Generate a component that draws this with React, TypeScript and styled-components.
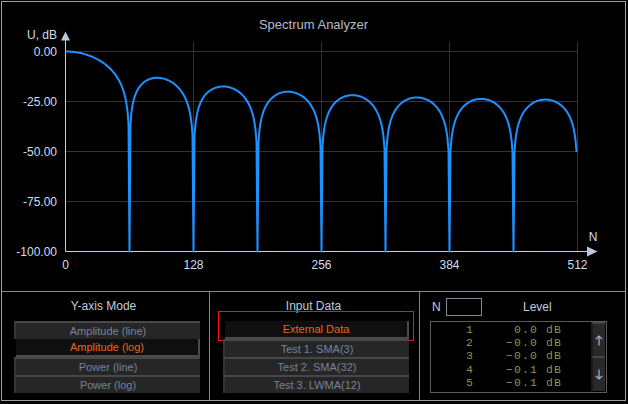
import React, { useMemo } from 'react';
import styled, { createGlobalStyle, css } from 'styled-components';

const GlobalStyle = createGlobalStyle`
  html, body { margin: 0; padding: 0; background: #000; }
  body { font-family: "Liberation Sans", Arial, sans-serif; }
`;

const Frame = styled.div`
  margin: 1px 0 0 1px;
  width: 625px;
  height: 400px;
  box-sizing: border-box;
  border: 1px solid #a0a0a0;
  background: #000;
  display: flex;
  flex-direction: column;
`;

const ChartPanel = styled.section`
  height: 290px;
  box-sizing: border-box;
  border-bottom: 1px solid #888;
  display: flex;
  flex-direction: column;
`;

const ChartTitle = styled.div`
  height: 26px;
  box-sizing: border-box;
  padding-top: 15px;
  text-align: center;
  font-size: 13px;
  line-height: 15px;
  color: #b4bccb;
  white-space: nowrap;
`;

const ChartSvg = styled.svg`
  display: block;
  width: 623px;
  height: 263px;
`;

const BottomPanel = styled.section`
  flex: 1;
  display: grid;
  grid-template-columns: 208px 210px 1fr;
`;

const Column = styled.div<{ $last?: boolean }>`
  box-sizing: border-box;
  padding-top: 7px;
  ${(p) => !p.$last && css`border-right: 1px solid #808080;`}
  display: flex;
  flex-direction: column;
`;

const GroupTitle = styled.div<{ $shift?: number }>`
  font-size: 12px;
  line-height: 14px;
  color: #c2ccda;
  text-align: center;
  padding-right: ${(p) => p.$shift ?? 0}px;
  margin-bottom: 8px;
`;

const ButtonStack = styled.div<{ $inset: number; $width: number }>`
  position: relative;
  margin-left: ${(p) => p.$inset}px;
  width: ${(p) => p.$width}px;
  display: flex;
  flex-direction: column;
`;

const ModeButton = styled.div<{ $active?: boolean; $focused?: boolean }>`
  position: relative;
  height: 18px;
  box-sizing: border-box;
  display: flex;
  align-items: center;
  justify-content: center;
  font-size: 11px;
  line-height: 12px;
  ${(p) =>
    p.$active
      ? css`
          background: #0f0f0f;
          color: #e8661c;
          border-right: 2px solid #4a4a4a;
          border-bottom: 2px solid #4a4a4a;
          margin-left: 2px;
        `
      : css`
          background: #262626;
          color: #74849a;
          border-top: 2px solid #474747;
          border-left: 2px solid #363636;
        `}
  ${(p) =>
    p.$focused &&
    css`
      &::after {
        content: '';
        position: absolute;
        top: -10px;
        left: -7px;
        right: -7px;
        bottom: -4px;
        border: 1px solid #ff1010;
        pointer-events: none;
      }
    `}
`;

const LevelHeader = styled.div`
  display: flex;
  align-items: center;
  height: 18px;
  margin-top: -1px;
  padding-left: 12px;
  font-size: 12px;
  color: #c2ccda;
`;

const NLabel = styled.span`
  width: 14px;
`;

const NInput = styled.div`
  width: 36px;
  height: 18px;
  box-sizing: border-box;
  border: 1px solid #7a8a9c;
  background: #000;
`;

const LevelLabel = styled.span`
  margin-left: 41px;
`;

const ListBox = styled.div`
  margin: 5px 0 0 10px;
  width: 177px;
  height: 72px;
  box-sizing: border-box;
  border: 1px solid #5c5c5c;
  display: flex;
`;

const Rows = styled.div`
  flex: 1;
  padding-top: 1px;
  padding-left: 35px;
  font-family: "Liberation Mono", "Courier New", monospace;
  font-size: 11.5px;
  letter-spacing: 1.1px;
  color: #84994c;
  white-space: pre;
`;

const Row = styled.div`
  height: 13.2px;
  line-height: 13.2px;
`;

const ScrollBar = styled.div`
  width: 14px;
  margin-right: 1px;
  display: flex;
  flex-direction: column;
`;

const ScrollButton = styled.div<{ $h: number }>`
  height: ${(p) => p.$h}px;
  box-sizing: border-box;
  background: #292929;
  border-top: 2px solid #444;
  border-left: 2px solid #1a1a1a;
  display: flex;
  align-items: center;
  justify-content: center;
`;

const ArrowIcon = ({ down }: { down?: boolean }) => (
  <svg width="8" height="11" viewBox="0 0 8 11" style={{ display: 'block' }}>
    <path
      d={down ? 'M4 0.5 V10 M0.8 6.8 L4 10 L7.2 6.8' : 'M4 10.5 V1 M0.8 4.2 L4 1 L7.2 4.2'}
      fill="none"
      stroke="#a4b6d0"
      strokeWidth="1.2"
    />
  </svg>
);

const LABEL = '#cddff3';
const AXIS = '#c8d2e6';
const GRID = '#333';

const dbToY = (db: number) => 51.5 - 2 * Math.max(db, -100);
const kToX = (k: number) => 65.5 + k;

function Chart() {
  const points = useMemo(() => {
    const pts: string[] = [];
    for (let k = 0; k < 512; k++) {
      let h = 1;
      if (k > 0) {
        h = Math.sin((Math.PI * k * 16) / 1024) / (16 * Math.sin((Math.PI * k) / 1024));
      }
      const a = Math.abs(h);
      const db = a < 1e-12 ? -200 : 20 * Math.log10(a);
      pts.push(`${kToX(k).toFixed(1)},${dbToY(db).toFixed(2)}`);
    }
    return pts.join(' ');
  }, []);

  const yTicks = [0, -25, -50, -75, -100];
  const xTicks = [0, 128, 256, 384, 512];

  return (
    <ChartSvg viewBox="2 28 623 263">
      {[0, -25, -50, -75].map((d) => (
        <line key={d} x1={65.5} x2={577.5} y1={dbToY(d)} y2={dbToY(d)} stroke={GRID} strokeWidth={1} />
      ))}
      {[128, 256, 384, 512].map((k) => (
        <line key={k} x1={kToX(k)} x2={kToX(k)} y1={42} y2={251.5} stroke={GRID} strokeWidth={1} />
      ))}
      <line x1={65.5} x2={65.5} y1={40} y2={251.5} stroke={AXIS} strokeWidth={1} />
      <line x1={65.5} x2={588} y1={251.5} y2={251.5} stroke={AXIS} strokeWidth={1} />
      <polygon points="61,40.5 65.5,31.5 70,40.5" fill="#b8c8e0" />
      <polygon points="587,246.5 597.5,251.5 587,256.5" fill="#b8c8e0" />
      <polyline points={points} fill="none" stroke="#1e90ff" strokeWidth={2} strokeLinejoin="round" />
      <g fontFamily='"Liberation Sans", Arial, sans-serif' fontSize={12} fill={LABEL}>
        <text x={57} y={38.5} textAnchor="end">U, dB</text>
        {yTicks.map((d) => (
          <text key={d} x={57} y={dbToY(d) + 4.5} textAnchor="end">
            {d.toFixed(2)}
          </text>
        ))}
        {xTicks.map((k) => (
          <text key={k} x={kToX(k)} y={269} textAnchor="middle">
            {k}
          </text>
        ))}
        <text x={593} y={241} textAnchor="middle">N</text>
      </g>
    </ChartSvg>
  );
}

const yModes = ['Amplitude (line)', 'Amplitude (log)', 'Power (line)', 'Power (log)'];
const inputs = ['External Data', 'Test 1. SMA(3)', 'Test 2. SMA(32)', 'Test 3. LWMA(12)'];
const levels = ['1     0.0 dB', '2    \u22120.0 dB', '3    \u22120.0 dB', '4    \u22120.1 dB', '5    \u22120.1 dB'];

export default function App() {
  return (
    <>
      <GlobalStyle />
      <Frame>
        <ChartPanel>
          <ChartTitle>Spectrum Analyzer</ChartTitle>
          <Chart />
        </ChartPanel>
        <BottomPanel>
          <Column>
            <GroupTitle $shift={4}>Y-axis Mode</GroupTitle>
            <ButtonStack $inset={12} $width={186}>
              {yModes.map((m, i) => (
                <ModeButton key={m} $active={i === 1}>
                  {m}
                </ModeButton>
              ))}
            </ButtonStack>
          </Column>
          <Column>
            <GroupTitle $shift={2}>Input Data</GroupTitle>
            <ButtonStack $inset={13} $width={186}>
              {inputs.map((m, i) => (
                <ModeButton key={m} $active={i === 0} $focused={i === 0}>
                  {m}
                </ModeButton>
              ))}
            </ButtonStack>
          </Column>
          <Column $last>
            <LevelHeader>
              <NLabel>N</NLabel>
              <NInput />
              <LevelLabel>Level</LevelLabel>
            </LevelHeader>
            <ListBox>
              <Rows>
                {levels.map((l) => (
                  <Row key={l}>{l}</Row>
                ))}
              </Rows>
              <ScrollBar>
                <ScrollButton $h={34}>
                  <ArrowIcon />
                </ScrollButton>
                <ScrollButton $h={35}>
                  <ArrowIcon down />
                </ScrollButton>
              </ScrollBar>
            </ListBox>
          </Column>
        </BottomPanel>
      </Frame>
    </>
  );
}
